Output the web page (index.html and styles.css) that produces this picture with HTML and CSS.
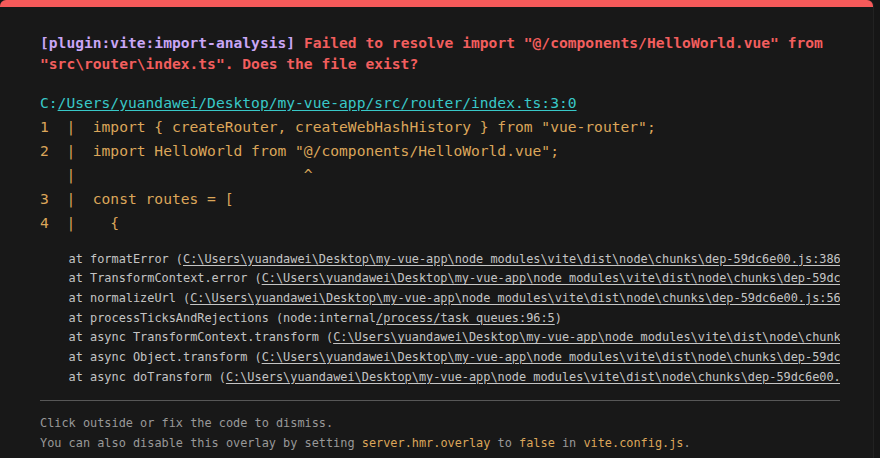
FILE: index.html
```html
<!DOCTYPE html>
<html lang="en">
<head>
<meta charset="utf-8">
<title>Vite error overlay</title>
<link rel="stylesheet" href="styles.css">
</head>
<body>
<div class="backdrop">
  <div class="window">
    <pre class="message"><span class="plugin">[plugin:vite:import-analysis] </span><span class="message-body">Failed to resolve import "@/components/HelloWorld.vue" from
"src\router\index.ts". Does the file exist?</span></pre>
    <pre class="file">C:<span class="link">/Users/yuandawei/Desktop/my-vue-app/src/router/index.ts:3:0</span></pre>
    <pre class="frame">1  |  import { createRouter, createWebHashHistory } from "vue-router";
2  |  import HelloWorld from "@/components/HelloWorld.vue";
   |                          ^
3  |  const routes = [
4  |    {</pre>
    <pre class="stack">    at formatError (<span class="link">C:\Users\yuandawei\Desktop\my-vue-app\node_modules\vite\dist\node\chunks\dep-59dc6e00.js:386</span>
    at TransformContext.error (<span class="link">C:\Users\yuandawei\Desktop\my-vue-app\node_modules\vite\dist\node\chunks\dep-59dc</span>
    at normalizeUrl (<span class="link">C:\Users\yuandawei\Desktop\my-vue-app\node_modules\vite\dist\node\chunks\dep-59dc6e00.js:56</span>
    at processTicksAndRejections (node:internal<span class="link">/process/task_queues:96:5</span>)
    at async TransformContext.transform (<span class="link">C:\Users\yuandawei\Desktop\my-vue-app\node_modules\vite\dist\node\chunk</span>
    at async Object.transform (<span class="link">C:\Users\yuandawei\Desktop\my-vue-app\node_modules\vite\dist\node\chunks\dep-59dc</span>
    at async doTransform (<span class="link">C:\Users\yuandawei\Desktop\my-vue-app\node_modules\vite\dist\node\chunks\dep-59dc6e00.</span></pre>
    <div class="tip">Click outside or fix the code to dismiss.<br>You can also disable this overlay by setting <code class="tip-code">server.hmr.overlay</code> to <code class="tip-code">false</code> in <code class="tip-code">vite.config.js</code>.</div>
  </div>
</div>
</body>
</html>
```
FILE: styles.css
```css
html, body {
  margin: 0;
  padding: 0;
  background: #161616;
  height: 100%;
  overflow: hidden;
}

.backdrop {
  display: flex;
  align-items: stretch;
  height: 100%;
  font-family: "DejaVu Sans Mono", "Liberation Mono", monospace;
}

.window {
  box-sizing: border-box;
  width: 873px;
  flex: none;
  background: #181818;
  border-top: 7px solid #f65a5a;
  border-radius: 6px 6px 0 0;
  padding: 26px 33px 0 40px;
  box-shadow: 1px 0 0 #222;
  overflow: hidden;
}

pre {
  margin: 0;
  font-family: "DejaVu Sans Mono", "Liberation Mono", monospace;
  font-size: 14.62px;
}

.message {
  line-height: 20.8px;
  font-weight: 700;
  white-space: pre-wrap;
  margin-bottom: 16px;
}

.plugin {
  color: #c9a6f6;
}

.message-body {
  color: #f25e5e;
}

.file {
  color: #38c8c8;
  line-height: 24px;
  white-space: pre;
}

.link {
  text-decoration: underline;
  text-underline-offset: 2px;
}

.frame {
  color: #dca65a;
  line-height: 24px;
  white-space: pre;
  margin-bottom: 15px;
}

.stack {
  color: #c4c4c4;
  font-size: 11.88px;
  line-height: 19.65px;
  white-space: pre;
  overflow: hidden;
  margin-bottom: 13px;
}

.tip {
  border-top: 1px solid #575757;
  padding-top: 13px;
  font-size: 11.88px;
  line-height: 19.5px;
  color: #999999;
  white-space: nowrap;
}

.tip-code {
  font-family: "DejaVu Sans Mono", "Liberation Mono", monospace;
  font-size: 11.88px;
  color: #dca65a;
}
```
